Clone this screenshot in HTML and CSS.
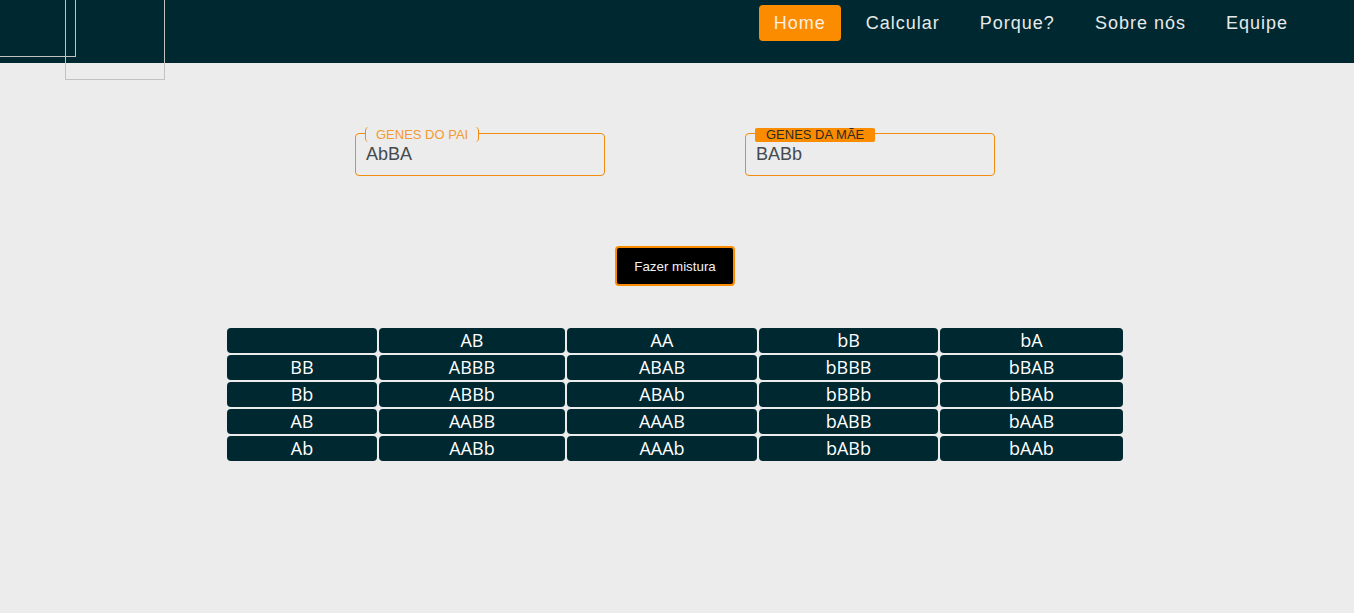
FILE: index.html
```html
<!DOCTYPE html>
<html lang="pt">
<head>
<meta charset="utf-8">
<title>Genética</title>
<link rel="stylesheet" href="styles.css">
</head>
<body>
<header class="topbar">
  <span class="deco deco-a"></span>
  <span class="deco deco-b"></span>
  <nav class="nav">
    <a class="nav-item active" href="#">Home</a>
    <a class="nav-item" href="#">Calcular</a>
    <a class="nav-item" href="#">Porque?</a>
    <a class="nav-item" href="#">Sobre nós</a>
    <a class="nav-item" href="#">Equipe</a>
  </nav>
</header>
<main class="main">
  <div class="fields">
    <div class="field">
      <span class="field-label">GENES DO PAI</span>
      <span class="field-value">AbBA</span>
    </div>
    <div class="field">
      <span class="field-label filled">GENES DA MÃE</span>
      <span class="field-value">BABb</span>
    </div>
  </div>
  <button class="mix-btn" type="button">Fazer mistura</button>
  <table class="grid">
    <colgroup>
      <col class="c1"><col class="c2"><col class="c3"><col class="c4"><col class="c5">
    </colgroup>
    <tr><td></td><td>AB</td><td>AA</td><td>bB</td><td>bA</td></tr>
    <tr><td>BB</td><td>ABBB</td><td>ABAB</td><td>bBBB</td><td>bBAB</td></tr>
    <tr><td>Bb</td><td>ABBb</td><td>ABAb</td><td>bBBb</td><td>bBAb</td></tr>
    <tr><td>AB</td><td>AABB</td><td>AAAB</td><td>bABB</td><td>bAAB</td></tr>
    <tr><td>Ab</td><td>AABb</td><td>AAAb</td><td>bABb</td><td>bAAb</td></tr>
  </table>
</main>
</body>
</html>
```
FILE: styles.css
```css
* { box-sizing: border-box; }
html, body { margin: 0; padding: 0; }
body {
  background: #ececec;
  font-family: "Liberation Sans", Arial, sans-serif;
  height: 613px;
  overflow: hidden;
}
.topbar {
  position: relative;
  height: 63px;
  background: #002831;
  display: flex;
  justify-content: flex-end;
  padding: 5px 51px 0 0;
}
.deco {
  position: absolute;
  border: 1px solid #c2c2c2;
  pointer-events: none;
}
.deco-a { left: -30px; top: -44px; width: 106px; height: 101px; }
.deco-b { left: 65px; top: -21px; width: 100px; height: 101px; z-index: 2; }
.nav { display: flex; gap: 10px; align-items: flex-start; }
.nav-item {
  display: block;
  height: 36px;
  line-height: 36px;
  padding: 0 15px;
  font-size: 18px;
  letter-spacing: 1px;
  color: #e6eaea;
  text-decoration: none;
  border-radius: 4px;
}
.nav-item.active { background: #fb8c00; color: #fbeee0; }
.main {
  display: flex;
  flex-direction: column;
  align-items: center;
  padding: 70px 4px 0 0;
}
.fields { display: flex; gap: 140px; }
.field {
  position: relative;
  width: 250px;
  height: 43px;
  border: 1px solid #f08c10;
  border-radius: 4px;
  padding: 10px 10px 0 10px;
}
.field-label {
  position: absolute;
  left: 9px;
  top: -7px;
  height: 15px;
  line-height: 15px;
  padding: 0 10px;
  font-size: 13px;
  color: #f39a30;
  background: #ececec;
  border-left: 1px solid #f08c10;
  border-right: 1px solid #f08c10;
  border-radius: 4px;
}
.field-label.filled {
  background: #fb8c00;
  color: #2e2a22;
  border-color: #fb8c00;
  border-radius: 2px;
  top: -6px;
  height: 14px;
  line-height: 14px;
}
.field-value {
  display: block;
  font-size: 18px;
  line-height: 20px;
  color: #444a50;
}
.mix-btn {
  margin-top: 70px;
  width: 120px;
  height: 40px;
  background: #000;
  border: 2px solid #fb8c00;
  border-radius: 4px;
  color: #f2f2f2;
  font-family: "Liberation Sans", Arial, sans-serif;
  font-size: 13.33px;
  padding: 0;
}
.grid {
  margin-top: 40px;
  border-collapse: separate;
  border-spacing: 2px;
  table-layout: fixed;
  width: 900px;
}
.c1 { width: 150px; }
.c2 { width: 186px; }
.c3 { width: 190px; }
.c4 { width: 179px; }
.c5 { width: 183px; }
.grid td {
  background: #002831;
  color: #ffffff;
  border-radius: 4px;
  height: 25px;
  padding: 0;
  text-align: center;
  font-family: "Open Sans", sans-serif;
  font-size: 18px;
  line-height: 25px;
}
```
